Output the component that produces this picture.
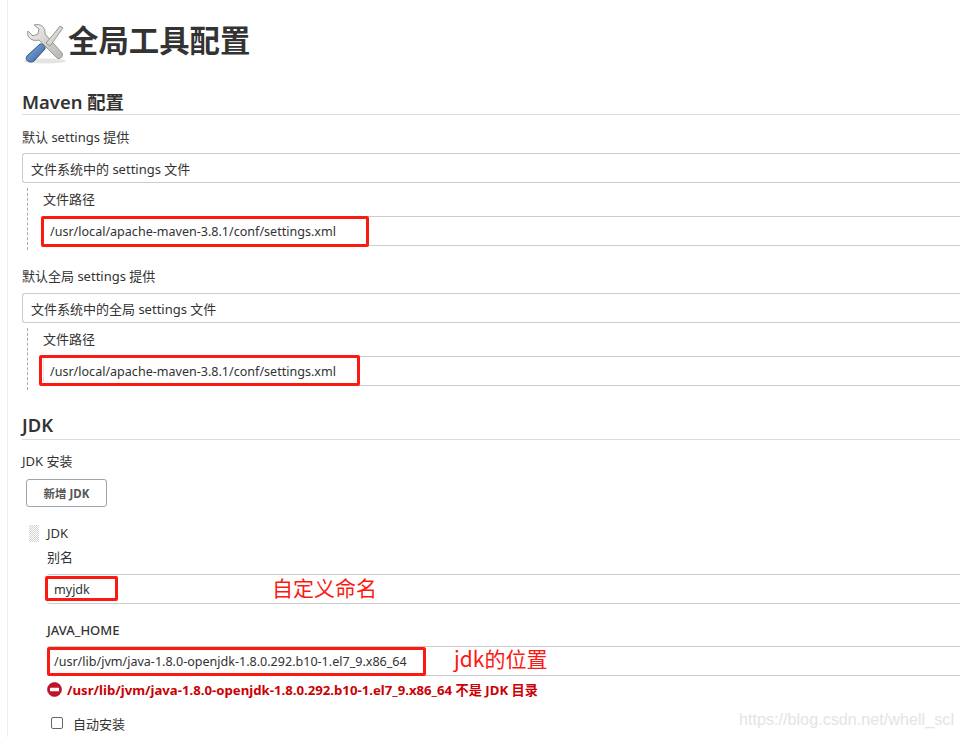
<div class="page">
  <h1>
    <svg class="tools" width="46" height="46" viewBox="0 0 46 46">
      <defs>
        <linearGradient id="metal" x1="0" y1="0" x2="1" y2="1">
          <stop offset="0" stop-color="#f2f2f0" />
          <stop offset="1" stop-color="#b4b6b1" />
        </linearGradient>
        <linearGradient id="grip" x1="0" y1="0" x2="1" y2="1">
          <stop offset="0" stop-color="#8fb3dc" />
          <stop offset="1" stop-color="#2f5f9f" />
        </linearGradient>
      </defs>
      <ellipse cx="23" cy="43" rx="21" ry="2.5" fill="#d8d8d8" opacity="0.7" />
      <g transform="translate(0 4)">
        <path d="M6 9 L11 14 L16 12 L17 7 L12 3 C18 1 24 5 23 12 L40 31 C42 34 38 38 35 36 L17 18 C10 20 4 15 6 9 Z" fill="url(#metal)" stroke="#95978f" stroke-width="1" />
        <path d="M24 21 L35 8 L38 4 L41 6 L38 10 L28 24 Z" fill="#d5d7d3" stroke="#95978f" stroke-width="1" />
        <path d="M5 34 L18 22 C20 21 24 25 23 27 L12 39 C8 42 2 38 5 34 Z" fill="url(#grip)" stroke="#2c5488" stroke-width="1" />
      </g>
    </svg>
    全局工具配置
  </h1>

  <section class="maven">
    <h2>Maven 配置</h2>
    <div class="label first">默认 settings 提供</div>
    <div class="field select">文件系统中的 settings 文件</div>
    <div class="nested">
      <div class="label">文件路径</div>
      <div class="field value">
        /usr/local/apache-maven-3.8.1/conf/settings.xml
        <span class="mark mark-a"></span>
      </div>
    </div>

    <div class="label second">默认全局 settings 提供</div>
    <div class="field select">文件系统中的全局 settings 文件</div>
    <div class="nested">
      <div class="label">文件路径</div>
      <div class="field value">
        /usr/local/apache-maven-3.8.1/conf/settings.xml
        <span class="mark mark-b"></span>
      </div>
    </div>
  </section>

  <section class="jdk">
    <h2>JDK</h2>
    <div class="label first">JDK 安装</div>
    <button class="add">新增 JDK</button>

    <div class="item-head">
      <span class="handle"></span>
      <span>JDK</span>
    </div>
    <div class="item">
      <div class="label">别名</div>
      <div class="field value">
        myjdk
        <span class="mark mark-c"></span>
        <span class="note note-c">自定义命名</span>
      </div>

      <div class="label strong">JAVA_HOME</div>
      <div class="field value">
        /usr/lib/jvm/java-1.8.0-openjdk-1.8.0.292.b10-1.el7_9.x86_64
        <span class="mark mark-d"></span>
        <span class="note note-d">jdk的位置</span>
      </div>

      <div class="error">
        <svg width="15" height="15" viewBox="0 0 15 15">
          <circle cx="7.5" cy="7.5" r="7" fill="#c4122b" stroke="#8f0f20" stroke-width="0.6" />
          <rect x="3" y="5.8" width="9" height="3.4" rx="0.5" fill="#fff" />
        </svg>
        <span>/usr/lib/jvm/java-1.8.0-openjdk-1.8.0.292.b10-1.el7_9.x86_64 不是 JDK 目录</span>
      </div>

      <div class="check">
        <span class="box"></span>
        <span>自动安装</span>
      </div>
    </div>
  </section>

  <div class="watermark">https://blog.csdn.net/whell_scl</div>
</div>

<style>
  :global(body) {
    background: #fff;
    overflow: hidden;
  }

  .page {
    position: relative;
    box-sizing: border-box;
    width: 953px;
    height: 737px;
    margin-left: 7px;
    padding: 18px 0 0 14px;
    border-left: 1px solid #eeeeee;
    overflow: hidden;
    font-family: "Noto Sans", "Noto Sans CJK SC", sans-serif;
    font-size: 13px;
    color: #333333;
  }

  h1 {
    display: flex;
    align-items: center;
    height: 46px;
    margin: 0;
    font-size: 30.4px;
    font-weight: 700;
    line-height: 38px;
    color: #333;
  }

  .tools {
    flex: none;
  }

  h2 {
    margin: 0;
    border-bottom: 1px solid #dddddd;
    font-size: 18.4px;
    font-weight: 600;
    line-height: 24px;
    color: #333;
  }

  .maven {
    margin-top: 26px;
  }

  .jdk {
    margin-top: 23px;
  }

  .jdk h2 {
    padding-bottom: 2px;
  }

  .label {
    height: 18px;
    line-height: 18px;
  }

  .label.first {
    margin-top: 13px;
    margin-bottom: 7px;
  }

  .jdk .label.first {
    margin-top: 12px;
    margin-bottom: 9px;
  }

  .label.second {
    margin-top: 17px;
    margin-bottom: 8px;
  }

  .label.strong {
    font-weight: 500;
    margin-top: 17px;
    margin-bottom: 7px;
  }

  .field {
    position: relative;
    box-sizing: border-box;
    height: 30px;
    width: 1000px;
    padding-left: 6px;
    border: 1px solid #cccccc;
    border-right: 0;
    border-left-color: #e6e6e6;
    border-radius: 3px 0 0 3px;
    line-height: 30px;
    white-space: nowrap;
  }

  .value {
    font-size: 12.55px;
  }

  .select {
    padding-left: 8px;
    border-left-color: #cccccc;
  }

  .nested {
    margin: 5px 0 0 5px;
    padding: 2px 0 4px 15px;
    border-left: 1px dashed #aaaaaa;
  }

  .nested .label {
    margin-bottom: 8px;
  }

  .add {
    display: block;
    box-sizing: border-box;
    width: 81px;
    height: 28px;
    margin: 0 0 0 4px;
    padding: 0;
    border: 1px solid #9aa5ae;
    border-radius: 3px;
    background: #fff;
    font-family: inherit;
    font-size: 11.5px;
    font-weight: 700;
    color: #555;
  }

  .item-head {
    display: flex;
    align-items: center;
    gap: 8px;
    margin: 17px 0 0 7px;
    height: 18px;
  }

  .handle {
    width: 10px;
    height: 17px;
    background: repeating-conic-gradient(#d2d2d2 0 25%, #fff 0 50%) 0 0 / 2px 2px;
  }

  .item {
    margin: 6px 0 0 25px;
  }

  .item .label:first-child {
    margin-bottom: 8px;
  }

  .error {
    display: flex;
    align-items: center;
    gap: 5px;
    height: 18px;
    margin-top: 4px;
    font-size: 13.2px;
    font-weight: 700;
    color: #cc0003;
    white-space: nowrap;
  }

  .check {
    display: flex;
    align-items: center;
    gap: 10px;
    margin: 16px 0 0 4px;
    height: 18px;
  }

  .box {
    box-sizing: border-box;
    width: 12px;
    height: 12px;
    border: 1px solid #666;
    border-radius: 2px;
    background: #fff;
  }

  /* hand-drawn annotations sitting on top of the form */
  .mark {
    position: absolute;
    box-sizing: border-box;
    border: 3px solid #fb1a12;
    border-radius: 2px;
  }

  .mark-a {
    left: -3px;
    top: -1px;
    width: 328px;
    height: 31px;
  }

  .mark-b {
    left: -5px;
    top: -2px;
    width: 321px;
    height: 31px;
  }

  .mark-c {
    left: -3px;
    top: 1px;
    width: 73px;
    height: 25px;
  }

  .mark-d {
    left: -1px;
    top: 0;
    width: 379px;
    height: 29px;
  }

  .note {
    position: absolute;
    font-family: "Noto Sans CJK SC", sans-serif;
    font-size: 21px;
    font-weight: 400;
    line-height: 26px;
    color: #fb1a12;
  }

  .note-c {
    left: 224px;
    top: -1px;
  }

  .note-d {
    left: 406px;
    top: -2px;
  }

  .watermark {
    position: absolute;
    right: 6px;
    top: 710px;
    font-family: "Liberation Sans", sans-serif;
    font-size: 16.2px;
    color: #e4e4e4;
  }
</style>
